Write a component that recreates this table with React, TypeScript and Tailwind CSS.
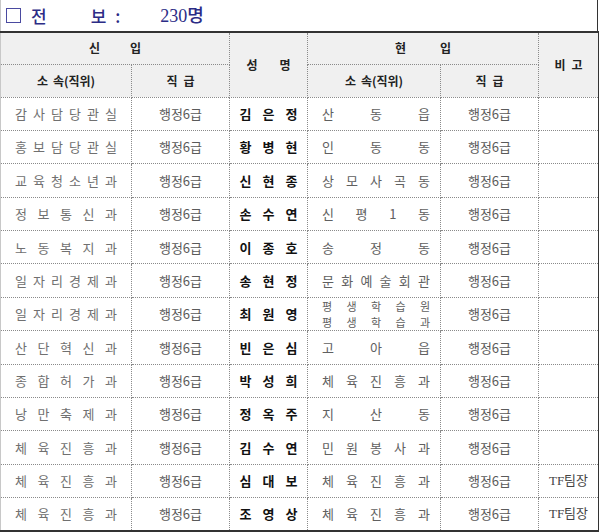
import React from "react"

type Row = {
    fromDept: string
    name: string
    toDept: string | string[]
    note?: string
}

const rows: Row[] = [
    { fromDept: "감사담당관실", name: "김은정", toDept: "산동읍" },
    { fromDept: "홍보담당관실", name: "황병현", toDept: "인동동" },
    { fromDept: "교육청소년과", name: "신현종", toDept: "상모사곡동" },
    { fromDept: "정보통신과", name: "손수연", toDept: "신평1동" },
    { fromDept: "노동복지과", name: "이종호", toDept: "송정동" },
    { fromDept: "일자리경제과", name: "송현정", toDept: "문화예술회관" },
    { fromDept: "일자리경제과", name: "최원영", toDept: ["평생학습원", "평생학습과"] },
    { fromDept: "산단혁신과", name: "빈은심", toDept: "고아읍" },
    { fromDept: "종합허가과", name: "박성희", toDept: "체육진흥과" },
    { fromDept: "낭만축제과", name: "정옥주", toDept: "지산동" },
    { fromDept: "체육진흥과", name: "김수연", toDept: "민원봉사과" },
    { fromDept: "체육진흥과", name: "심대보", toDept: "체육진흥과", note: "TF팀장" },
    { fromDept: "체육진흥과", name: "조영상", toDept: "체육진흥과", note: "TF팀장" },
]

const font = { fontFamily: '"Noto Sans CJK KR", "Noto Sans", sans-serif' }
const serif = { fontFamily: '"Liberation Serif", "Noto Sans CJK KR", serif' }

// spreads each character across the cell, like a hwp "distributed" paragraph
function Spread({ text, className = "" }: { text: string; className?: string }) {
    return (
        <div className={`flex justify-between ${className}`}>
            {text.split("").map((c, i) => (
                <span key={i}>{c}</span>
            ))}
        </div>
    )
}

function Gap({ parts, gap }: { parts: string[]; gap: string }) {
    return (
        <div className={`flex justify-center whitespace-nowrap ${gap}`}>
            {parts.map((p, i) => (
                <span key={i}>{p}</span>
            ))}
        </div>
    )
}

const cell = "border border-dotted border-[#8a8a8a] p-0 align-middle"

export default function App() {
    return (
        <div className="w-[600px] h-[532px] bg-white overflow-hidden" style={font}>
            <div className="w-[598px] h-[31px] border-r border-[#333] border-l border-l-[#c8c8c8] flex items-center text-[#2c2c86] text-[17px] font-medium leading-none">
                <span className="ml-[5px] w-[15px] h-[15px] border-[1.5px] border-[#4a4aa0]" />
                <span className="ml-[10px]">전</span>
                <span className="ml-[44px]">보</span>
                <span className="ml-[9px]">:</span>
                <span className="ml-[40px] text-[18px]" style={serif}>230명</span>
            </div>
            <table className="table-fixed border-collapse w-[598px] border-t-2 border-t-[#333] border-b-2 border-b-[#333] border-r border-r-[#333] border-l border-l-[#c8c8c8]">
                <colgroup>
                    <col className="w-[131px]" />
                    <col className="w-[98px]" />
                    <col className="w-[78px]" />
                    <col className="w-[133px]" />
                    <col className="w-[98px]" />
                    <col className="w-[60px]" />
                </colgroup>
                <thead className="bg-[#f0f0f0] text-[12px] font-bold text-[#222]">
                    <tr className="h-[32px]">
                        <th colSpan={2} className={`${cell} border-l-0 border-t-0`}>
                            <Gap parts={["신", "입"]} gap="gap-[30px]" />
                        </th>
                        <th rowSpan={2} className={`${cell} border-t-0`}>
                            <Gap parts={["성", "명"]} gap="gap-[22px]" />
                        </th>
                        <th colSpan={2} className={`${cell} border-t-0`}>
                            <Gap parts={["현", "입"]} gap="gap-[34px]" />
                        </th>
                        <th rowSpan={2} className={`${cell} border-t-0 border-r-0`}>
                            <Gap parts={["비", "고"]} gap="gap-[6px]" />
                        </th>
                    </tr>
                    <tr className="h-[33px]">
                        <th className={`${cell} border-l-0`}>
                            <Gap parts={["소", "속(직위)"]} gap="gap-[5px]" />
                        </th>
                        <th className={cell}>
                            <Gap parts={["직", "급"]} gap="gap-[6px]" />
                        </th>
                        <th className={cell}>
                            <Gap parts={["소", "속(직위)"]} gap="gap-[5px]" />
                        </th>
                        <th className={cell}>
                            <Gap parts={["직", "급"]} gap="gap-[6px]" />
                        </th>
                    </tr>
                </thead>
                <tbody className="text-[13px]">
                    {rows.map((r, i) => (
                        <tr key={i} className="h-[33.4px]">
                            <td className={`${cell} border-l-0 text-[#707070]`}>
                                <Spread text={r.fromDept} className="pl-[14px] pr-[14px]" />
                            </td>
                            <td className={`${cell} text-center text-[#5a5a5a]`}>행정6급</td>
                            <td className={`${cell} text-[13px] font-bold text-[#111]`}>
                                <Gap parts={r.name.split("")} gap="gap-[11px]" />
                            </td>
                            <td className={`${cell} text-[#606060]`}>
                                {Array.isArray(r.toDept) ? (
                                    <div className="flex flex-col text-[11px] leading-[16px]">
                                        {r.toDept.map((t, k) => (
                                            <Spread key={k} text={t} className="pl-[14px] pr-[10px]" />
                                        ))}
                                    </div>
                                ) : (
                                    <Spread text={r.toDept} className="pl-[14px] pr-[10px]" />
                                )}
                            </td>
                            <td className={`${cell} text-center text-[#5a5a5a]`}>행정6급</td>
                            <td className={`${cell} border-r-0 text-center text-[#444] text-[13px] font-normal`} style={serif}>
                                {r.note ?? ""}
                            </td>
                        </tr>
                    ))}
                </tbody>
            </table>
        </div>
    )
}
